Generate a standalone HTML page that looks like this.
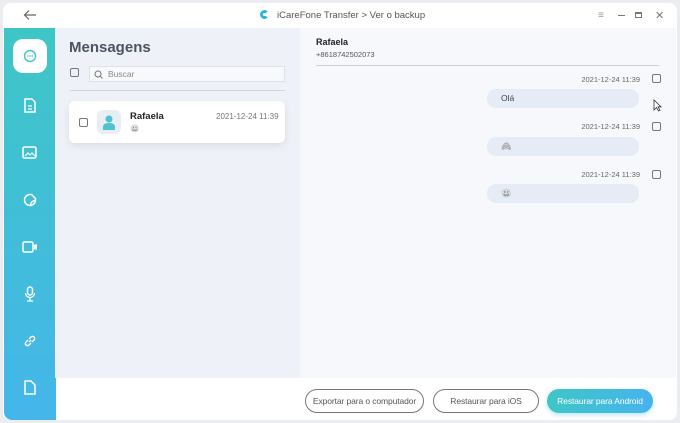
<!DOCTYPE html>
<html><head><meta charset="utf-8"><style>
*{margin:0;padding:0;box-sizing:border-box}
body{width:680px;height:423px;background:#ecedf0;font-family:"Liberation Sans",sans-serif;position:relative;overflow:hidden}
.win{position:absolute;left:3px;top:3px;width:674px;height:417px;background:#fff;border-radius:8px;overflow:hidden}
.title{position:absolute;left:0;top:0;width:674px;height:25px;background:#fff;font-size:10px;color:#555}
.side{position:absolute;left:1px;top:25px;width:52px;height:392px;background:linear-gradient(#3ec6c6,#44b6ea);border-radius:0 0 0 8px}
.left{position:absolute;left:52px;top:25px;width:245px;height:350px;background:#eef1f7}
.right{position:absolute;left:297px;top:25px;width:376px;height:350px;background:#f7f8fb}
.bottom{position:absolute;left:53px;top:375px;width:621px;height:42px;background:#fff}
.ic{position:absolute;left:15px}
.cb{position:absolute;width:9px;height:9px;border:1.2px solid #777;border-radius:2px}
.btn{position:absolute;top:11px;height:24px;border-radius:12px;font-size:8.5px;text-align:center;line-height:22px;color:#555;border:1.3px solid #777;white-space:nowrap;letter-spacing:-.1px}
.bub{position:absolute;left:187px;width:152px;height:19px;background:#e6ecf5;border-radius:9px;font-size:8.5px;color:#444;line-height:19px;padding-left:14px}
.ts{position:absolute;right:36px;font-size:7.5px;color:#666}
.em{filter:grayscale(1);opacity:.6}
</style></head><body>
<div class="win">
<div class="title">
<svg style="position:absolute;left:20px;top:6px" width="14" height="12"><path d="M13 6H2M6 1.5L1.5 6 6 10.5" stroke="#666" stroke-width="1.2" fill="none"/></svg>
<div style="position:absolute;left:257px;top:7px;width:9px;height:9px;border-radius:50%;border:3px solid #2bb8d0;border-right-color:#fff"></div>
<div style="position:absolute;left:274px;top:7px;font-size:9.5px">iCareFone Transfer &gt; Ver o backup</div>
<div style="position:absolute;left:595px;top:7px;color:#999">≡</div>
<div style="position:absolute;left:615px;top:12px;width:7px;height:1px;background:#777"></div>
<div style="position:absolute;left:632px;top:9px;width:7px;height:6px;border:1px solid #777;border-top-width:2px"></div>
<div style="position:absolute;left:652px;top:6px;color:#777;font-size:11px">✕</div>
</div>
<div class="side">
<div style="position:absolute;left:9px;top:11px;width:34px;height:34px;background:#fff;border-radius:10px"></div>
<svg class="ic" style="left:19px;top:21px" width="14" height="14"><circle cx="7" cy="7" r="5.5" stroke="#3ec6c6" stroke-width="1.4" fill="none"/><circle cx="4.8" cy="7" r=".8" fill="#3ec6c6"/><circle cx="7" cy="7" r=".8" fill="#3ec6c6"/><circle cx="9.2" cy="7" r=".8" fill="#3ec6c6"/></svg>
<svg class="ic" style="left:19px;top:70px" width="14" height="15"><path d="M2 1h7l3 3v10H2z" stroke="#fff" stroke-width="1.5" fill="none"/><path d="M5 8h4M5 11h4" stroke="#fff" stroke-width="1.3"/></svg>
<svg class="ic" style="left:18px;top:118px" width="15" height="13"><rect x="1" y="1" width="13" height="11" rx="1.5" stroke="#fff" stroke-width="1.5" fill="none"/><path d="M3 10l3-3 2 2 2-2 3 3" stroke="#fff" stroke-width="1.2" fill="none"/></svg>
<svg class="ic" style="left:19px;top:165px" width="14" height="14"><path d="M12.5 7.5A5.5 5.5 0 1 1 6.5 1.5h2l4 4z" stroke="#fff" stroke-width="1.5" fill="none"/><path d="M12.5 7.5a5 5 0 0 0-5 5" stroke="#fff" stroke-width="1.5" fill="none"/></svg>
<svg class="ic" style="left:18px;top:213px" width="16" height="12"><rect x="1" y="1" width="10" height="10" rx="1.5" stroke="#fff" stroke-width="1.5" fill="none"/><path d="M12 4l3-1v6l-3-1z" fill="#fff"/></svg>
<svg class="ic" style="left:20px;top:258px" width="12" height="16"><rect x="3.5" y="1" width="5" height="8" rx="2.5" stroke="#fff" stroke-width="1.5" fill="none"/><path d="M1.5 7a4.5 4.5 0 0 0 9 0M6 11.5v3M3 15h6" stroke="#fff" stroke-width="1.3" fill="none"/></svg>
<svg class="ic" style="left:19px;top:306px" width="14" height="14"><path d="M6 8l2-2M5 6L3 8a2 2 0 0 0 3 3l2-2M9 8l2-2a2 2 0 0 0-3-3L6 5" stroke="#fff" stroke-width="1.5" fill="none"/></svg>
<svg class="ic" style="left:20px;top:352px" width="12" height="15"><path d="M1 1h6l4 4v9H1z" stroke="#fff" stroke-width="1.5" fill="none"/></svg>
</div>
<div class="left">
<div style="position:absolute;left:14px;top:11px;font-size:15px;font-weight:bold;color:#4a5462">Mensagens</div>
<div class="cb" style="left:15px;top:40px"></div>
<div style="position:absolute;left:34px;top:38px;width:196px;height:16px;background:#f7f9fc;border:1px solid #dde2ea;font-size:8.5px;color:#888;line-height:14px;padding-left:18px">Buscar</div>
<svg style="position:absolute;left:39px;top:42px" width="9" height="9"><circle cx="4" cy="4" r="3" stroke="#777" fill="none"/><path d="M6 6l2.5 2.5" stroke="#777"/></svg>
<div style="position:absolute;left:15px;top:62px;width:215px;height:1px;background:#cfd5de"></div>
<div style="position:absolute;left:14px;top:73px;width:216px;height:42px;background:#fff;border-radius:6px;box-shadow:0 3px 8px rgba(0,0,0,.08)">
<div class="cb" style="left:10px;top:17px"></div>
<div style="position:absolute;left:28px;top:9px;width:24px;height:24px;background:#e8eef1;border-radius:6px"></div>
<svg style="position:absolute;left:33px;top:13px" width="14" height="16"><circle cx="7" cy="5" r="3.5" fill="#4cc3cf"/><path d="M1 16v-3q0-4 6-4t6 4v3z" fill="#4cc3cf"/></svg>
<div style="position:absolute;left:61px;top:10px;font-size:9.5px;font-weight:bold;color:#222">Rafaela</div>
<div class="em" style="position:absolute;left:61px;top:23px;font-size:7.5px;color:#888">😃</div>
<div style="position:absolute;left:147px;top:11px;font-size:8px;color:#777">2021-12-24 11:39</div>
</div>
</div>
<div class="right">
<div style="position:absolute;left:16px;top:9px;font-size:9px;font-weight:bold;color:#222">Rafaela</div>
<div style="position:absolute;left:16px;top:22px;font-size:7.5px;color:#555">+8618742502073</div>
<div style="position:absolute;left:16px;top:37px;width:343px;height:1px;background:#cdd2da"></div>
<div class="ts" style="top:47px">2021-12-24 11:39</div><div class="cb" style="left:352px;top:46px"></div>
<div class="bub" style="top:61px">Olá</div>
<div class="ts" style="top:94px">2021-12-24 11:39</div><div class="cb" style="left:352px;top:94px"></div>
<div class="bub" style="top:109px"><span class="em">🙈</span></div>
<div class="ts" style="top:142px">2021-12-24 11:39</div><div class="cb" style="left:352px;top:142px"></div>
<div class="bub" style="top:156px"><span class="em">😃</span></div>
<svg style="position:absolute;left:353px;top:71px" width="9" height="13"><path d="M1 1v10l2.5-2.5 2 3.5 1.5-.8-2-3.4H8z" fill="#fff" stroke="#333" stroke-width=".8"/></svg>
</div>
<div class="bottom">
<div class="btn" style="left:249px;width:119px">Exportar para o computador</div>
<div class="btn" style="left:377px;width:106px">Restaurar para iOS</div>
<div class="btn" style="left:491px;width:106px;border:none;line-height:24px;color:#fff;background:linear-gradient(90deg,#3ec6c6,#46b3ee);box-shadow:0 2px 5px rgba(60,180,220,.35)">Restaurar para Android</div>
</div>
</div>
</body></html>
